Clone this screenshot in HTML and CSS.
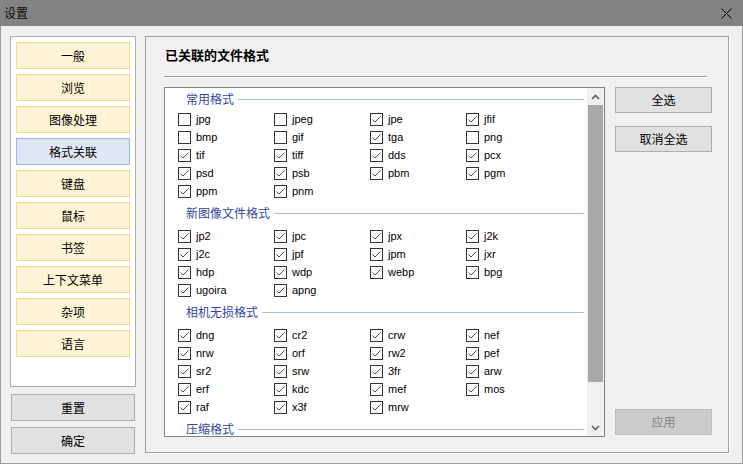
FILE: index.html
```html
<!DOCTYPE html>
<html lang="zh-CN">
<head>
<meta charset="utf-8">
<title>设置</title>
<link rel="stylesheet" href="styles.css">
</head>
<body>
<div class="titlebar">
  <span class="title">设置</span>
  <svg class="close" width="11" height="11" viewBox="0 0 11 11"><path d="M0.5 0.5 L10.5 10.5 M10.5 0.5 L0.5 10.5" stroke="#000" stroke-width="1" fill="none"/></svg>
</div>
<div class="frame">
  <div class="leftcol">
    <div class="navbox">
      <div class="nav">一般</div>
      <div class="nav">浏览</div>
      <div class="nav">图像处理</div>
      <div class="nav active">格式关联</div>
      <div class="nav">键盘</div>
      <div class="nav">鼠标</div>
      <div class="nav">书签</div>
      <div class="nav">上下文菜单</div>
      <div class="nav">杂项</div>
      <div class="nav">语言</div>
    </div>
    <div class="lbtn">重置</div>
    <div class="lbtn">确定</div>
  </div>
  <div class="panel">
    <div class="ptitle">已关联的文件格式</div>
    <div class="sep"></div>
    <div class="content">
      <div class="list">
        <div class="lc">
          <div class="group">
            <div class="ghead"><span class="glabel">常用格式</span><span class="gline"></span></div>
            <div class="grid">
              <div class="cb"><span class="box"></span>jpg</div>
              <div class="cb"><span class="box"></span>jpeg</div>
              <div class="cb"><span class="box on"><svg width="11" height="11" viewBox="0 0 11 11"><path d="M1.5 5.5 L4 8 L9.5 2.5" stroke="#505050" fill="none"/></svg></span>jpe</div>
              <div class="cb"><span class="box on"><svg width="11" height="11" viewBox="0 0 11 11"><path d="M1.5 5.5 L4 8 L9.5 2.5" stroke="#505050" fill="none"/></svg></span>jfif</div>
              <div class="cb"><span class="box"></span>bmp</div>
              <div class="cb"><span class="box"></span>gif</div>
              <div class="cb"><span class="box on"><svg width="11" height="11" viewBox="0 0 11 11"><path d="M1.5 5.5 L4 8 L9.5 2.5" stroke="#505050" fill="none"/></svg></span>tga</div>
              <div class="cb"><span class="box"></span>png</div>
              <div class="cb"><span class="box on"><svg width="11" height="11" viewBox="0 0 11 11"><path d="M1.5 5.5 L4 8 L9.5 2.5" stroke="#505050" fill="none"/></svg></span>tif</div>
              <div class="cb"><span class="box on"><svg width="11" height="11" viewBox="0 0 11 11"><path d="M1.5 5.5 L4 8 L9.5 2.5" stroke="#505050" fill="none"/></svg></span>tiff</div>
              <div class="cb"><span class="box on"><svg width="11" height="11" viewBox="0 0 11 11"><path d="M1.5 5.5 L4 8 L9.5 2.5" stroke="#505050" fill="none"/></svg></span>dds</div>
              <div class="cb"><span class="box on"><svg width="11" height="11" viewBox="0 0 11 11"><path d="M1.5 5.5 L4 8 L9.5 2.5" stroke="#505050" fill="none"/></svg></span>pcx</div>
              <div class="cb"><span class="box on"><svg width="11" height="11" viewBox="0 0 11 11"><path d="M1.5 5.5 L4 8 L9.5 2.5" stroke="#505050" fill="none"/></svg></span>psd</div>
              <div class="cb"><span class="box on"><svg width="11" height="11" viewBox="0 0 11 11"><path d="M1.5 5.5 L4 8 L9.5 2.5" stroke="#505050" fill="none"/></svg></span>psb</div>
              <div class="cb"><span class="box on"><svg width="11" height="11" viewBox="0 0 11 11"><path d="M1.5 5.5 L4 8 L9.5 2.5" stroke="#505050" fill="none"/></svg></span>pbm</div>
              <div class="cb"><span class="box on"><svg width="11" height="11" viewBox="0 0 11 11"><path d="M1.5 5.5 L4 8 L9.5 2.5" stroke="#505050" fill="none"/></svg></span>pgm</div>
              <div class="cb"><span class="box on"><svg width="11" height="11" viewBox="0 0 11 11"><path d="M1.5 5.5 L4 8 L9.5 2.5" stroke="#505050" fill="none"/></svg></span>ppm</div>
              <div class="cb"><span class="box on"><svg width="11" height="11" viewBox="0 0 11 11"><path d="M1.5 5.5 L4 8 L9.5 2.5" stroke="#505050" fill="none"/></svg></span>pnm</div>
            </div>
          </div>
          <div class="group">
            <div class="ghead"><span class="glabel">新图像文件格式</span><span class="gline"></span></div>
            <div class="grid">
              <div class="cb"><span class="box on"><svg width="11" height="11" viewBox="0 0 11 11"><path d="M1.5 5.5 L4 8 L9.5 2.5" stroke="#505050" fill="none"/></svg></span>jp2</div>
              <div class="cb"><span class="box on"><svg width="11" height="11" viewBox="0 0 11 11"><path d="M1.5 5.5 L4 8 L9.5 2.5" stroke="#505050" fill="none"/></svg></span>jpc</div>
              <div class="cb"><span class="box on"><svg width="11" height="11" viewBox="0 0 11 11"><path d="M1.5 5.5 L4 8 L9.5 2.5" stroke="#505050" fill="none"/></svg></span>jpx</div>
              <div class="cb"><span class="box on"><svg width="11" height="11" viewBox="0 0 11 11"><path d="M1.5 5.5 L4 8 L9.5 2.5" stroke="#505050" fill="none"/></svg></span>j2k</div>
              <div class="cb"><span class="box on"><svg width="11" height="11" viewBox="0 0 11 11"><path d="M1.5 5.5 L4 8 L9.5 2.5" stroke="#505050" fill="none"/></svg></span>j2c</div>
              <div class="cb"><span class="box on"><svg width="11" height="11" viewBox="0 0 11 11"><path d="M1.5 5.5 L4 8 L9.5 2.5" stroke="#505050" fill="none"/></svg></span>jpf</div>
              <div class="cb"><span class="box on"><svg width="11" height="11" viewBox="0 0 11 11"><path d="M1.5 5.5 L4 8 L9.5 2.5" stroke="#505050" fill="none"/></svg></span>jpm</div>
              <div class="cb"><span class="box on"><svg width="11" height="11" viewBox="0 0 11 11"><path d="M1.5 5.5 L4 8 L9.5 2.5" stroke="#505050" fill="none"/></svg></span>jxr</div>
              <div class="cb"><span class="box on"><svg width="11" height="11" viewBox="0 0 11 11"><path d="M1.5 5.5 L4 8 L9.5 2.5" stroke="#505050" fill="none"/></svg></span>hdp</div>
              <div class="cb"><span class="box on"><svg width="11" height="11" viewBox="0 0 11 11"><path d="M1.5 5.5 L4 8 L9.5 2.5" stroke="#505050" fill="none"/></svg></span>wdp</div>
              <div class="cb"><span class="box on"><svg width="11" height="11" viewBox="0 0 11 11"><path d="M1.5 5.5 L4 8 L9.5 2.5" stroke="#505050" fill="none"/></svg></span>webp</div>
              <div class="cb"><span class="box on"><svg width="11" height="11" viewBox="0 0 11 11"><path d="M1.5 5.5 L4 8 L9.5 2.5" stroke="#505050" fill="none"/></svg></span>bpg</div>
              <div class="cb"><span class="box on"><svg width="11" height="11" viewBox="0 0 11 11"><path d="M1.5 5.5 L4 8 L9.5 2.5" stroke="#505050" fill="none"/></svg></span>ugoira</div>
              <div class="cb"><span class="box on"><svg width="11" height="11" viewBox="0 0 11 11"><path d="M1.5 5.5 L4 8 L9.5 2.5" stroke="#505050" fill="none"/></svg></span>apng</div>
            </div>
          </div>
          <div class="group">
            <div class="ghead"><span class="glabel">相机无损格式</span><span class="gline"></span></div>
            <div class="grid">
              <div class="cb"><span class="box on"><svg width="11" height="11" viewBox="0 0 11 11"><path d="M1.5 5.5 L4 8 L9.5 2.5" stroke="#505050" fill="none"/></svg></span>dng</div>
              <div class="cb"><span class="box on"><svg width="11" height="11" viewBox="0 0 11 11"><path d="M1.5 5.5 L4 8 L9.5 2.5" stroke="#505050" fill="none"/></svg></span>cr2</div>
              <div class="cb"><span class="box on"><svg width="11" height="11" viewBox="0 0 11 11"><path d="M1.5 5.5 L4 8 L9.5 2.5" stroke="#505050" fill="none"/></svg></span>crw</div>
              <div class="cb"><span class="box on"><svg width="11" height="11" viewBox="0 0 11 11"><path d="M1.5 5.5 L4 8 L9.5 2.5" stroke="#505050" fill="none"/></svg></span>nef</div>
              <div class="cb"><span class="box on"><svg width="11" height="11" viewBox="0 0 11 11"><path d="M1.5 5.5 L4 8 L9.5 2.5" stroke="#505050" fill="none"/></svg></span>nrw</div>
              <div class="cb"><span class="box on"><svg width="11" height="11" viewBox="0 0 11 11"><path d="M1.5 5.5 L4 8 L9.5 2.5" stroke="#505050" fill="none"/></svg></span>orf</div>
              <div class="cb"><span class="box on"><svg width="11" height="11" viewBox="0 0 11 11"><path d="M1.5 5.5 L4 8 L9.5 2.5" stroke="#505050" fill="none"/></svg></span>rw2</div>
              <div class="cb"><span class="box on"><svg width="11" height="11" viewBox="0 0 11 11"><path d="M1.5 5.5 L4 8 L9.5 2.5" stroke="#505050" fill="none"/></svg></span>pef</div>
              <div class="cb"><span class="box on"><svg width="11" height="11" viewBox="0 0 11 11"><path d="M1.5 5.5 L4 8 L9.5 2.5" stroke="#505050" fill="none"/></svg></span>sr2</div>
              <div class="cb"><span class="box on"><svg width="11" height="11" viewBox="0 0 11 11"><path d="M1.5 5.5 L4 8 L9.5 2.5" stroke="#505050" fill="none"/></svg></span>srw</div>
              <div class="cb"><span class="box on"><svg width="11" height="11" viewBox="0 0 11 11"><path d="M1.5 5.5 L4 8 L9.5 2.5" stroke="#505050" fill="none"/></svg></span>3fr</div>
              <div class="cb"><span class="box on"><svg width="11" height="11" viewBox="0 0 11 11"><path d="M1.5 5.5 L4 8 L9.5 2.5" stroke="#505050" fill="none"/></svg></span>arw</div>
              <div class="cb"><span class="box on"><svg width="11" height="11" viewBox="0 0 11 11"><path d="M1.5 5.5 L4 8 L9.5 2.5" stroke="#505050" fill="none"/></svg></span>erf</div>
              <div class="cb"><span class="box on"><svg width="11" height="11" viewBox="0 0 11 11"><path d="M1.5 5.5 L4 8 L9.5 2.5" stroke="#505050" fill="none"/></svg></span>kdc</div>
              <div class="cb"><span class="box on"><svg width="11" height="11" viewBox="0 0 11 11"><path d="M1.5 5.5 L4 8 L9.5 2.5" stroke="#505050" fill="none"/></svg></span>mef</div>
              <div class="cb"><span class="box on"><svg width="11" height="11" viewBox="0 0 11 11"><path d="M1.5 5.5 L4 8 L9.5 2.5" stroke="#505050" fill="none"/></svg></span>mos</div>
              <div class="cb"><span class="box on"><svg width="11" height="11" viewBox="0 0 11 11"><path d="M1.5 5.5 L4 8 L9.5 2.5" stroke="#505050" fill="none"/></svg></span>raf</div>
              <div class="cb"><span class="box on"><svg width="11" height="11" viewBox="0 0 11 11"><path d="M1.5 5.5 L4 8 L9.5 2.5" stroke="#505050" fill="none"/></svg></span>x3f</div>
              <div class="cb"><span class="box on"><svg width="11" height="11" viewBox="0 0 11 11"><path d="M1.5 5.5 L4 8 L9.5 2.5" stroke="#505050" fill="none"/></svg></span>mrw</div>
            </div>
          </div>
          <div class="group">
            <div class="ghead"><span class="glabel">压缩格式</span><span class="gline"></span></div>
          </div>
        </div>
        <div class="sb">
          <div class="sbarrow"><svg width="9" height="6" viewBox="0 0 9 6"><path d="M1 5 L4.5 1.5 L8 5" stroke="#606060" stroke-width="1.6" fill="none"/></svg></div>
          <div class="sbtrack"><div class="thumb"></div></div>
          <div class="sbarrow"><svg width="9" height="6" viewBox="0 0 9 6"><path d="M1 1 L4.5 4.5 L8 1" stroke="#606060" stroke-width="1.6" fill="none"/></svg></div>
        </div>
      </div>
      <div class="rbtns">
        <div class="rbtn">全选</div>
        <div class="rbtn second">取消全选</div>
        <div class="rbtn disabled">应用</div>
      </div>
    </div>
  </div>
</div>
</body>
</html>
```
FILE: styles.css
```css
* { box-sizing: border-box; }
html, body { margin: 0; padding: 0; }
body {
  width: 743px;
  height: 464px;
  overflow: hidden;
  background: #f0f0f0;
  font-family: "Noto Sans CJK SC", sans-serif;
  font-size: 12px;
  color: #000;
}
.titlebar {
  height: 26px;
  background: #838383;
  display: flex;
  align-items: center;
  justify-content: space-between;
  padding: 0 11px 0 4px;
}
.title { font-size: 12px; line-height: 14px; color: #0a0a0a; }
.close { display: block; }

.frame {
  height: 438px;
  border: 1px solid #9c9c9c;
  border-top: none;
  display: flex;
  gap: 9px;
  padding: 10px 0 0 9px;
}
.leftcol {
  width: 126px;
  display: flex;
  flex-direction: column;
}
.navbox {
  height: 351px;
  background: #fff;
  border: 1px solid #adadad;
  padding: 5px;
  display: flex;
  flex-direction: column;
  gap: 5px;
}
.nav {
  height: 27px;
  background: #fff5d6;
  border: 1px solid #fcd68e;
  display: flex;
  align-items: center;
  justify-content: center;
  line-height: 14px;
}
.nav.active {
  background: #dfe6f4;
  border-color: #9db6e5;
}
.lbtn {
  height: 27px;
  margin: 7px 1px 0;
  background: #e1e1e1;
  border: 1px solid #adadad;
  display: flex;
  align-items: center;
  justify-content: center;
  line-height: 14px;
}
.lbtn + .lbtn { margin-top: 6px; }

.panel {
  width: 584px;
  height: 417px;
  border: 1px solid #a0a0a0;
  box-shadow: 1px 1px 0 #fff;
  padding: 9px 16px 0 18px;
  display: flex;
  flex-direction: column;
}
.ptitle {
  font-size: 13px;
  font-weight: bold;
  line-height: 17px;
  height: 17px;
  padding-left: 1px;
}
.sep {
  height: 2px;
  margin-top: 13px;
  margin-right: 5px;
  border-top: 1px solid #a0a0a0;
  border-bottom: 1px solid #fff;
}
.content {
  margin-top: 9px;
  display: flex;
  gap: 10px;
}
.list {
  width: 441px;
  height: 350px;
  border: 1px solid #828282;
  background: #fff;
  display: flex;
  overflow: hidden;
}
.lc {
  flex: 1;
  overflow: hidden;
}
.ghead {
  height: 22px;
  display: flex;
  align-items: center;
  padding-left: 21px;
  padding-right: 3px;
}
.group + .group .ghead {
  height: 27px;
  padding-bottom: 1px;
}
.glabel {
  color: #3446a2;
  line-height: 14px;
}
.gline {
  flex: 1;
  height: 1px;
  background: #a9bbe4;
  margin-left: 4px;
}
.grid {
  display: grid;
  grid-template-columns: repeat(4, 96px);
  grid-auto-rows: 18px;
  padding-left: 13px;
}
.cb {
  display: flex;
  align-items: center;
  font-family: "Liberation Sans", Arial, sans-serif;
  font-size: 11px;
  color: #000;
}
.box {
  width: 13px;
  height: 13px;
  border: 1px solid #333;
  background: #fff;
  margin-right: 5px;
  flex: none;
}
.box svg { display: block; }

.sb {
  width: 17px;
  background: #f0f0f0;
  display: flex;
  flex-direction: column;
}
.sbarrow {
  height: 17px;
  display: flex;
  align-items: center;
  justify-content: center;
}
.sbtrack {
  flex: 1;
  padding: 0 1px 0 1px;
}
.thumb {
  height: 277px;
  background: #a8a8a8;
}

.rbtns {
  width: 97px;
  height: 350px;
  display: flex;
  flex-direction: column;
}
.rbtn {
  height: 26px;
  background: #e1e1e1;
  border: 1px solid #adadad;
  display: flex;
  align-items: center;
  justify-content: center;
  line-height: 14px;
}
.rbtn.second { margin-top: 13px; }
.rbtn.disabled {
  margin-top: auto;
  margin-bottom: 2px;
  background: #cccccc;
  border-color: #bfbfbf;
  color: #838383;
}
```
